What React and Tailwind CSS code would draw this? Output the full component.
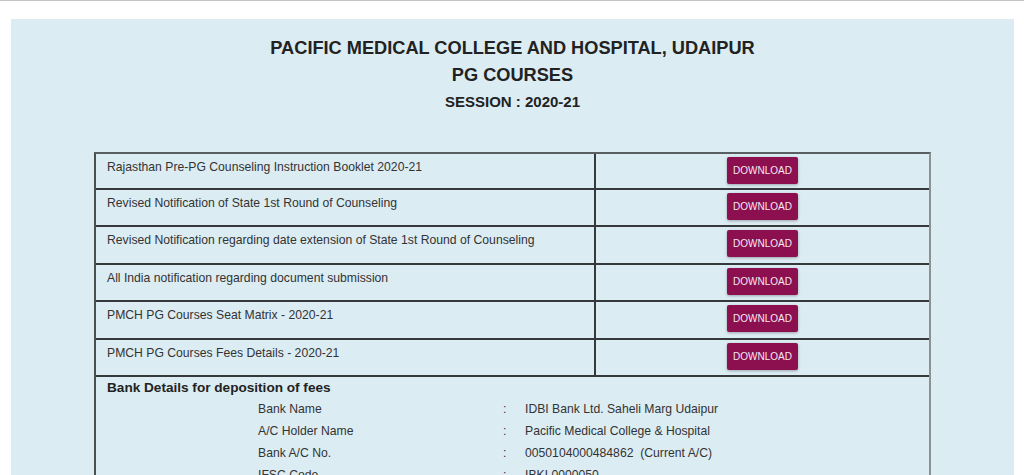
import React from "react";

const rows = [
  { t: "Rajasthan Pre-PG Counseling Instruction Booklet 2020-21", h: "h-[36px]" },
  { t: "Revised Notification of State 1st Round of Counseling", h: "h-[37px]" },
  { t: "Revised Notification regarding date extension of State 1st Round of Counseling", h: "h-[38px]" },
  { t: "All India notification regarding document submission", h: "h-[37px]" },
  { t: "PMCH PG Courses Seat Matrix - 2020-21", h: "h-[38px]" },
  { t: "PMCH PG Courses Fees Details - 2020-21", h: "h-[37px]" },
];

const bank = [
  ["Bank Name", "IDBI Bank Ltd. Saheli Marg Udaipur"],
  ["A/C Holder Name", "Pacific Medical College & Hospital"],
  ["Bank A/C No.", "0050104000484862  (Current A/C)"],
  ["IFSC Code", "IBKL0000050"],
];

export default function App() {
  return (
    <div
      className="w-[1024px] h-[475px] overflow-hidden bg-white border-t border-[#c4c4c4]"
      style={{ fontFamily: '"Liberation Sans", Arial, sans-serif' }}
    >
      <div className="mt-[18px] ml-[11px] mr-[10px] bg-[#dcecf3] px-[83px] pt-[16px] pb-[40px]">
        <div className="text-center text-[#222] font-bold">
          <div className="text-[18.2px] leading-[27px]">PACIFIC MEDICAL COLLEGE AND HOSPITAL, UDAIPUR</div>
          <div className="text-[18.2px] leading-[27px]">PG COURSES</div>
          <div className="text-[15px] leading-[26px]">SESSION : 2020-21</div>
        </div>

        <div className="mt-[37px] border-t-2 border-l-2 border-r-2 border-t-[#5a5f61] border-l-[#4a4f52] border-r-[#8a9295] text-[12.2px] text-[#333]">
          {rows.map((r, i) => (
            <div key={i} className={`flex ${r.h} border-b-2 border-[#35393b]`}>
              <div className="w-[500px] border-r-2 border-[#35393b] pl-[11px] pt-[6px] leading-[15px]">
                {r.t}
              </div>
              <div className="flex-1 flex justify-center pt-[3px]">
                <button className="w-[71px] h-[27px] rounded-[2px] bg-[#8c0f50] text-[10px] text-[#f6e8f1] shadow-[0_1px_3px_rgba(0,0,0,0.3)] leading-none">
                  DOWNLOAD
                </button>
              </div>
            </div>
          ))}
          <div className="pl-[11px]">
            <div className="font-bold leading-[19px] pt-[1px] text-[#222] text-[13.6px]">Bank Details for deposition of fees</div>
            <div className="pt-[1px]">
              {bank.map(([a, b]) => (
                <div key={a} className="flex leading-[22px]">
                  <div className="ml-[151px] w-[245px]">{a}</div>
                  <div className="w-[22px]">:</div>
                  <div className="whitespace-pre">{b}</div>
                </div>
              ))}
            </div>
          </div>
        </div>
      </div>
    </div>
  );
}
